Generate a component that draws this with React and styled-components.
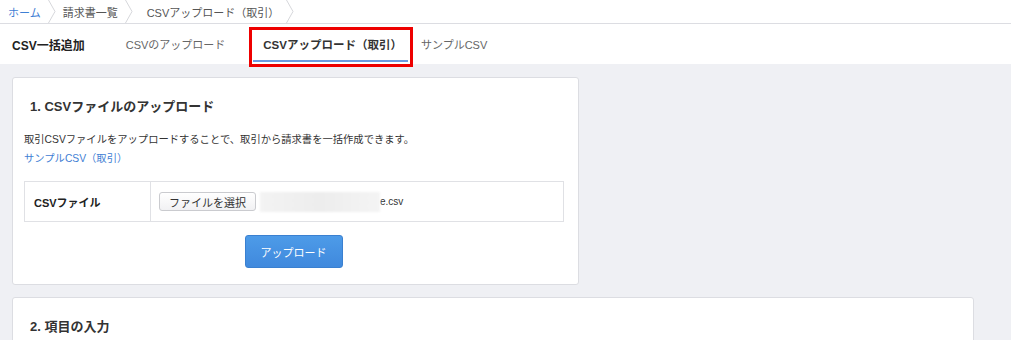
import React from "react";
import styled, { createGlobalStyle } from "styled-components";

const Global = createGlobalStyle`
  html, body { margin: 0; padding: 0; background: #eff0f4; }
  body {
    font-family: "Liberation Sans", "Noto Sans CJK JP", sans-serif;
    color: #333;
  }
  * { box-sizing: border-box; }
`;

const Page = styled.div`
  width: 1011px;
  height: 340px;
  overflow: hidden;
  background: #eff0f4;
`;

const Breadcrumb = styled.nav`
  display: flex;
  height: 24px;
  background: #fff;
  border-bottom: 1px solid #dcdde2;
  padding-left: 8px;
`;

const Crumb = styled.a`
  display: flex;
  align-items: center;
  font-size: 11px;
  color: ${(p) => (p.$link ? "#3f80d4" : "#555")};
  text-decoration: none;
  padding-right: 7px;
  margin-left: ${(p) => p.$ml || 0}px;
`;

const Sep = styled.svg`
  width: 8px;
  height: 23px;
  flex: none;
`;

const TabBar = styled.div`
  position: relative;
  display: flex;
  align-items: stretch;
  height: 40px;
  background: #fff;
  padding-left: 12px;
`;

const Title = styled.h1`
  margin: 0 31px 0 0;
  display: flex;
  align-items: center;
  font-size: 12px;
  font-weight: bold;
  color: #222;
`;

const Tab = styled.a`
  position: relative;
  display: flex;
  align-items: center;
  padding: ${(p) => (p.$active ? "0 6px 0 10px" : "0 10px")};
  margin-left: ${(p) => p.$ml || 0}px;
  font-size: ${(p) => (p.$active ? "11.5px" : "11px")};
  font-weight: ${(p) => (p.$active ? "bold" : "normal")};
  color: ${(p) => (p.$active ? "#333" : "#666")};
  text-decoration: none;
  &::after {
    content: "";
    display: ${(p) => (p.$active ? "block" : "none")};
    position: absolute;
    left: 0;
    right: 0;
    bottom: 2px;
    height: 2px;
    background: #6c9be0;
  }
`;

const Highlight = styled.div`
  position: absolute;
  left: -4px;
  right: -5px;
  top: 3px;
  bottom: -3px;
  border: 3px solid #ee0000;
  pointer-events: none;
`;

const Content = styled.main`
  display: flex;
  flex-direction: column;
  gap: 12px;
  padding: 13px 37px 0 12px;
`;

const Card = styled.section`
  width: ${(p) => p.$width || "100%"};
  background: #fff;
  border: 1px solid #dcdde2;
  border-radius: 3px;
  padding: 0 14px 16px 11px;
`;

const CardTitle = styled.h2`
  margin: 0;
  padding: 18px 0 0 6px;
  height: 52px;
  font-size: 13px;
  font-weight: bold;
  color: #333;
`;

const Desc = styled.p`
  margin: 0;
  font-size: 10.3px;
  color: #333;
  line-height: 19px;
`;

const Link = styled.a`
  display: block;
  font-size: 10.3px;
  color: #3f80d4;
  text-decoration: none;
  line-height: 19px;
`;

const FormTable = styled.div`
  display: grid;
  grid-template-columns: 126px 1fr;
  border: 1px solid #e0e1e5;
  margin-top: 13px;
  height: 41px;
`;

const Label = styled.div`
  display: flex;
  align-items: center;
  padding-left: 9px;
  border-right: 1px solid #e0e1e5;
  font-size: 11px;
  font-weight: bold;
  color: #222;
`;

const Value = styled.div`
  display: flex;
  align-items: center;
  padding-left: 8px;
`;

const FileButton = styled.button`
  height: 19px;
  width: 97px;
  padding: 0;
  border: 1px solid #cacbcf;
  border-radius: 3px;
  background: linear-gradient(#fff, #f1f1f3);
  font-family: inherit;
  font-size: 11px;
  color: #333;
`;

const Redacted = styled.div`
  width: 120px;
  height: 20px;
  margin-left: 4px;
  background: linear-gradient(90deg, #f3f3f3, #ededed 50%, #f4f4f4);
  filter: blur(1px);
`;

const FileName = styled.span`
  font-size: 10px;
  color: #333;
`;

const Actions = styled.div`
  display: flex;
  justify-content: center;
  padding-top: 13px;
  padding-right: 1px;
`;

const UploadButton = styled.button`
  width: 98px;
  height: 33px;
  border: 1px solid #3a80d0;
  border-radius: 3px;
  background: linear-gradient(#4d9be8, #4089dd);
  color: #fff;
  font-family: inherit;
  font-size: 11px;
`;

const Chevron = () => (
  <Sep viewBox="0 0 8 23">
    <polyline points="0.5,0 7,11.5 0.5,23" fill="none" stroke="#d6d7db" strokeWidth="1" />
  </Sep>
);

export default function App() {
  return (
    <Page>
      <Global />
      <Breadcrumb>
        <Crumb $link href="#">ホーム</Crumb>
        <Chevron />
        <Crumb $ml={7}>請求書一覧</Crumb>
        <Chevron />
        <Crumb $ml={14}>CSVアップロード（取引）</Crumb>
        <Chevron />
      </Breadcrumb>
      <TabBar>
        <Title>CSV一括追加</Title>
        <Tab>CSVのアップロード</Tab>
        <Tab $active $ml={18}>
          CSVアップロード（取引）
          <Highlight />
        </Tab>
        <Tab $ml={3}>サンプルCSV</Tab>
      </TabBar>
      <Content>
        <Card $width="567px">
          <CardTitle>1. CSVファイルのアップロード</CardTitle>
          <Desc>取引CSVファイルをアップロードすることで、取引から請求書を一括作成できます。</Desc>
          <Link href="#">サンプルCSV（取引）</Link>
          <FormTable>
            <Label>CSVファイル</Label>
            <Value>
              <FileButton>ファイルを選択</FileButton>
              <Redacted />
              <FileName>e.csv</FileName>
            </Value>
          </FormTable>
          <Actions>
            <UploadButton>アップロード</UploadButton>
          </Actions>
        </Card>
        <Card>
          <CardTitle>2. 項目の入力</CardTitle>
        </Card>
      </Content>
    </Page>
  );
}
